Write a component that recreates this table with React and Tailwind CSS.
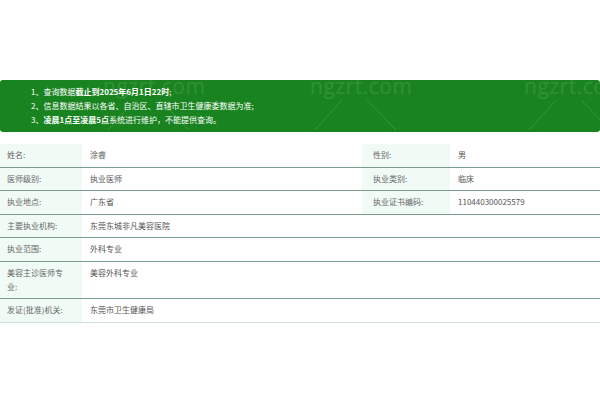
import React from 'react';

const rows = [
  { label: '姓名:', value: '涂睿', label2: '性别:', value2: '男' },
  { label: '医师级别:', value: '执业医师', label2: '执业类别:', value2: '临床' },
  { label: '执业地点:', value: '广东省', label2: '执业证书编码:', value2: '110440300025579' },
  { label: '主要执业机构:', value: '东莞东城非凡美容医院' },
  { label: '执业范围:', value: '外科专业' },
  { label: '美容主诊医师专业:', value: '美容外科专业' },
  { label: '发证(批准)机关:', value: '东莞市卫生健康局' },
];

// faint site watermark over the banner
const Watermark = ({ left }) => (
  <div className="absolute top-[-6px] pointer-events-none" style={{ left }} aria-hidden="true">
    <div className="text-[21px] leading-[24px] text-white/10 font-['Open_Sans',sans-serif] tracking-[0.5px]">
      ngzrt.com
    </div>
    <svg width="100" height="36" className="absolute top-[20px] left-0">
      <line x1="5" y1="36" x2="32" y2="6" stroke="rgba(255,255,255,0.14)" strokeWidth="1" />
      <line x1="57" y1="6" x2="86" y2="36" stroke="rgba(255,255,255,0.14)" strokeWidth="1" />
    </svg>
  </div>
);

const App = () => {
  return (
    <div className="w-[600px] h-[400px] bg-white overflow-hidden font-['Noto_Sans_CJK_SC',sans-serif] pt-[80px]">
      {/* notice banner */}
      <div className="relative overflow-hidden bg-[#19841f] rounded-[3px] h-[52px] pt-[5px] pl-[31px] text-white text-[8px] leading-[14px]">
        <Watermark left={103} />
        <Watermark left={310} />
        <Watermark left={524} />
        <div className="relative">
          1、查询数据<span className="font-bold">截止到2025年6月1日22时</span>;
        </div>
        <div className="relative">2、信息数据结果以各省、自治区、直辖市卫生健康委数据为准;</div>
        <div className="relative">
          3、<span className="font-bold">凌晨1点至凌晨5点</span>系统进行维护，不能提供查询。
        </div>
      </div>

      {/* doctor info */}
      <table className="mt-[12px] w-[600px] table-fixed border-collapse text-[8px] leading-[14px]">
        <colgroup>
          <col className="w-[82px]" />
          <col className="w-[280px]" />
          <col className="w-[88px]" />
          <col className="w-[150px]" />
        </colgroup>
        <tbody>
          {rows.map((row, i) => (
            <tr
              key={row.label}
              className={
                i === rows.length - 1
                  ? 'border-b border-[#cfe0d5]'
                  : 'border-b border-[#7a9e8a]'
              }
            >
              <td className="bg-[#f1fbf5] align-top pl-[7px] pr-[14px] pt-[4px] pb-[4.5px] text-[#666]">
                {row.label}
              </td>
              {row.label2 ? (
                <>
                  <td className="align-top pl-[8px] pt-[4px] pb-[4.5px] text-[#555]">{row.value}</td>
                  <td className="bg-[#f1fbf5] align-top pl-[11px] pt-[4px] pb-[4.5px] text-[#666]">
                    {row.label2}
                  </td>
                  <td className="align-top pl-[8px] pt-[4px] pb-[4.5px] text-[#555]">{row.value2}</td>
                </>
              ) : (
                <td colSpan={3} className="align-top pl-[8px] pt-[4px] pb-[4.5px] text-[#555]">
                  {row.value}
                </td>
              )}
            </tr>
          ))}
        </tbody>
      </table>
    </div>
  );
};

export default App;
